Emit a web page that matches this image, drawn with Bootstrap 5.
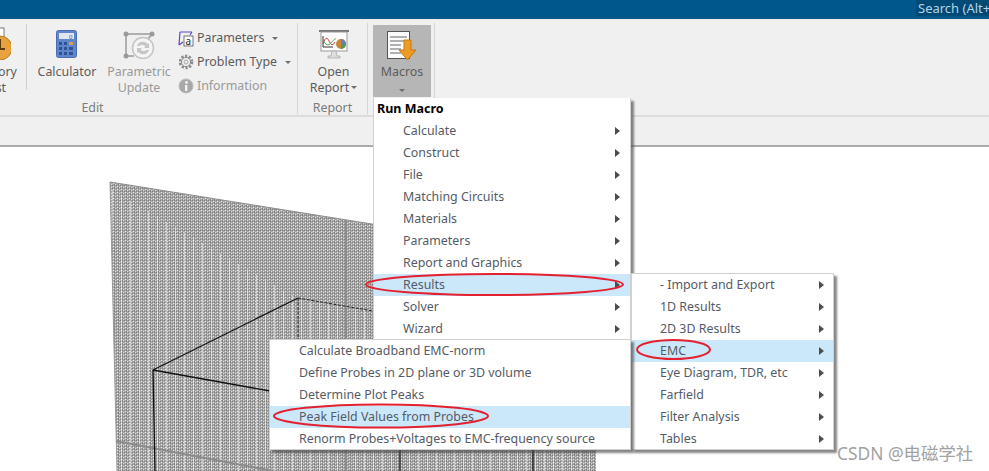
<!DOCTYPE html>
<html lang="en">
<head>
    <meta charset="UTF-8">
    <title>Run Macro</title>
    <link href="https://cdn.jsdelivr.net/npm/bootstrap@5.3.0/dist/css/bootstrap.min.css" rel="stylesheet">
    <style>
        html, body { height: 471px; overflow: hidden; }
        body { position: relative; background: #fff; font: 12.4px/16px "Noto Sans", "Noto Sans CJK SC", sans-serif; color: #555b66; }

        /* title bar */
        .title-strip { height: 20px; background: #00578a; border-bottom: 1px solid #e8e8e8; }
        .search-box { width: 73px; height: 16px; background: #004a76; color: #b9d2e2; font-size: 13px; line-height: 16px; padding-left: 2px; white-space: nowrap; overflow: hidden; }

        /* ribbon */
        .ribbon { height: 97px; background: #f0f0f0; border-bottom: 2px solid #dcdcdc; overflow: hidden; }
        .rb-group { border-right: 1px solid #d4d4d4; margin-top: 3px; height: 91px; flex: none; }
        .rb-buttons { height: 77px; }
        .rb-label { text-align: center; color: #7b7b7b; line-height: 16px; }
        .rb-edit { width: 410px; margin-left: -112px; }
        .rb-report { width: 70px; }
        .rb-macros { width: 67px; padding: 2px 3px 0 5px; }
        .rb-btn { flex: none; text-align: center; padding-top: 7px; color: #5c5c5c; }
        .rb-btn svg { display: block; margin: 0 auto 5px; }
        .rb-history { width: 139px; padding-left: 78px; border-right: 1px solid #d0d0d0; height: 66px; margin-top: 1px; padding-top: 2px; }
        .rb-history svg { margin-bottom: 4px; }
        .rb-calc { width: 80px; }
        .rb-param { width: 64px; color: #9a9a9a; }
        .rb-small { padding: 3px 0 0 7px; flex: none; }
        .rb-line { height: 24px; display: flex; align-items: center; gap: 3px; white-space: nowrap; color: #5c5c5c; }
        .rb-line.is-off { color: #9a9a9a; }
        .rb-caret { display: inline-block; border: 3px solid transparent; border-top: 3px solid #6d6d6d; border-bottom: 0; margin-left: 5px; }
        .rb-open { padding: 6px 0 0 2px; }
        .rb-open svg { margin-bottom: 4px; }
        .rb-open-caret { margin-left: 2px; vertical-align: 3px; }
        .rb-active { height: 72px; background: #b6b6b6; padding-top: 5px; text-align: center; color: #5c5c5c; }
        .rb-active svg { display: block; margin: 0 auto 1px; }
        .rb-active .rb-caret { margin: 0; }
        .tab-strip { height: 30px; background: #f0f0f0; border-bottom: 2px solid #ababab; }

        /* mesh area */
        .mesh-area { height: 324px; }
        .mesh-area svg { display: block; }

        /* menus */
        .macro-menu { display: block; position: absolute; margin: 0; padding: 0; border: 1px solid #d0d0d0; border-radius: 0; min-width: 0; background: #fff; box-shadow: 3px 3px 2px rgba(70, 70, 70, .65); font-size: 12.4px; color: #555b66; }
        .macro-main { left: 373px; top: 98px; width: 258px; height: 252px; border-top: 0; border-bottom: 0; z-index: 2; }
        .macro-sub { left: 631px; top: 273px; width: 203px; height: 177px; z-index: 3; }
        .macro-leaf { left: 269px; top: 339px; width: 362px; height: 111px; z-index: 4; }
        .macro-head { height: 22px; padding: 0 3px; font-weight: 700; color: #000; line-height: 21px; font-size: 12.5px; }
        .macro-item { display: flex; justify-content: space-between; align-items: center; height: 22px; padding: 0 10px 0 29px; color: #555b66; line-height: 22px; white-space: nowrap; }
        .macro-sub .macro-item { padding-left: 28px; padding-right: 9px; }
        .macro-leaf .macro-item { padding-left: 29px; }
        .macro-item.is-hot { background: #cbe8fb; color: #555b66; }
        .macro-arrow { border-left: 5px solid #4d4d4d; border-top: 4px solid transparent; border-bottom: 4px solid transparent; }

        .ring-layer { position: absolute; left: 0; top: 0; z-index: 5; pointer-events: none; }
        .csdn-mark { position: absolute; left: 837px; top: 442px; color: #a2a2a2; font-size: 17.4px; line-height: 22px; z-index: 6; white-space: nowrap; }
    </style>
</head>
<body>
    <div class="title-strip d-flex justify-content-end">
        <div class="search-box">Search (Alt+</div>
    </div>

    <div class="ribbon d-flex">
        <div class="rb-group rb-edit">
            <div class="rb-buttons d-flex">
                <div class="rb-btn rb-history">
                    <svg width="30" height="34" viewBox="0 0 30 34">
                        <rect x="9" y="2" width="14" height="11" fill="#fff" stroke="#777"/>
                        <circle cx="19" cy="22" r="12" fill="#e8a33e" stroke="#b97a20"/>
                        <path d="M19 13v10h5" fill="none" stroke="#5a3a10" stroke-width="2"/>
                    </svg>
                    History<br>List
                </div>
                <div class="rb-btn rb-calc">
                    <svg width="22" height="29" viewBox="0 0 22 29">
                        <rect x=".5" y=".5" width="20" height="27" rx="2" fill="#5f86cc" stroke="#4a6db0"/>
                        <rect x="3" y="3" width="15" height="6" fill="#dfe6f2"/>
                        <text x="13" y="8.500" font-size="6" fill="#555">0</text>
                        <g fill="#2f538f">
                            <rect x="3" y="12" width="3" height="3"/><rect x="8" y="12" width="3" height="3"/><rect x="13" y="12" width="4" height="3" fill="#d6a14e"/>
                            <rect x="3" y="17" width="3" height="3"/><rect x="8" y="17" width="3" height="3"/><rect x="13" y="17" width="4" height="3"/>
                            <rect x="3" y="22" width="3" height="3"/><rect x="8" y="22" width="3" height="3"/><rect x="13" y="22" width="4" height="3"/>
                        </g>
                    </svg>
                    Calculator
                </div>
                <div class="rb-btn rb-param">
                    <svg width="34" height="29" viewBox="0 0 34 29">
                        <path d="M4 4h26M4 4v22M4 26h8M30 4l-8 10" fill="none" stroke="#9a9a9a" stroke-width="1.500"/>
                        <g fill="#9a9a9a"><circle cx="4" cy="4" r="2.500"/><circle cx="30" cy="4" r="2.500"/><circle cx="4" cy="26" r="2.500"/></g>
                        <circle cx="21" cy="18" r="10.500" fill="#f4f4f4" stroke="#c4c4c4" stroke-width="1.500"/>
                        <path d="M15 16a6 6 0 0 1 10.500-2l1.500-1v5h-5l1.500-1.500a4 4 0 0 0-6-.5zM27 20a6 6 0 0 1-10.500 2l-1.500 1v-5h5l-1.500 1.500a4 4 0 0 0 6 .5z" fill="#c6c6c6"/>
                    </svg>
                    Parametric<br>Update
                </div>
                <div class="rb-small">
                    <div class="rb-line">
                        <svg width="16" height="17" viewBox="0 0 16 17">
                            <path d="M2 2h12M2 2L1 15M1 15l4-3M14 2l-2 3" fill="none" stroke="#6246c4" stroke-width="1.200"/>
                            <rect x="6" y="6" width="9" height="10" fill="#fff" stroke="#555" stroke-width=".8"/>
                            <text x="7.500" y="14.500" font-size="10" fill="#222">a</text>
                        </svg>
                        <span>Parameters</span><i class="rb-caret"></i>
                    </div>
                    <div class="rb-line">
                        <svg width="16" height="16" viewBox="0 0 16 16">
                            <circle cx="8" cy="8" r="6" fill="none" stroke="#8a8a8a" stroke-width="2.600" stroke-dasharray="2.200 1.600"/>
                            <circle cx="8" cy="8" r="4.600" fill="#eee" stroke="#8a8a8a"/>
                            <circle cx="8" cy="8" r="2" fill="none" stroke="#aaa"/>
                        </svg>
                        <span>Problem Type</span><i class="rb-caret"></i>
                    </div>
                    <div class="rb-line is-off">
                        <svg width="16" height="16" viewBox="0 0 16 16">
                            <circle cx="8" cy="8" r="7" fill="#a8a8a8" stroke="#bcbcbc"/>
                            <rect x="7" y="7" width="2.400" height="6" fill="#f2f2f2"/>
                            <circle cx="8.500" cy="4.500" r="1.400" fill="#f2f2f2"/>
                        </svg>
                        <span>Information</span>
                    </div>
                </div>
            </div>
            <div class="rb-label">Edit</div>
        </div>

        <div class="rb-group rb-report">
            <div class="rb-buttons">
                <div class="rb-btn rb-open">
                    <svg width="32" height="31" viewBox="0 0 32 31">
                        <rect x="1" y="1" width="30" height="2" fill="#777"/>
                        <rect x="3" y="3" width="26" height="19" fill="#fff" stroke="#999"/>
                        <path d="M5 7v11h10" fill="none" stroke="#333"/>
                        <path d="M5 15q3-10 6-3t6 1" fill="none" stroke="#d0443a"/>
                        <path d="M5 11q4 8 8 3t5-4" fill="none" stroke="#55a24a"/>
                        <circle cx="23" cy="15" r="5" fill="#c9873c"/>
                        <path d="M23 15v5a5 5 0 0 0 5-5z" fill="#4f9a57"/>
                        <path d="M23 15h5a5 5 0 0 0-5-5z" fill="#6f7fb2"/>
                        <path d="M14 22h4l1 5h3v2H10v-2h3z" fill="#ddd" stroke="#999" stroke-width=".6"/>
                    </svg>
                    Open<br>Report<i class="rb-caret rb-open-caret"></i>
                </div>
            </div>
            <div class="rb-label">Report</div>
        </div>

        <div class="rb-group rb-macros">
            <div class="rb-active">
                <svg width="32" height="33" viewBox="0 0 32 33">
                    <rect x="1.500" y="1.500" width="22" height="27" fill="#fbfbfb" stroke="#555"/>
                    <path d="M4 7h17M4 11h17M4 15h11M4 19h11M4 23h11" stroke="#666"/>
                    <path d="M18 10h7v10h5l-8.500 10L13 20h5z" fill="#ec9c22" stroke="#c67a10"/>
                </svg>
                Macros<br><i class="rb-caret"></i>
            </div>
        </div>
    </div>

    <div class="tab-strip"></div>

    <div class="mesh-area">
        <svg width="989" height="324" viewBox="0 147 989 324">
            <defs>
                <pattern id="meshDots" width="4" height="3" patternUnits="userSpaceOnUse">
                    <rect width="4" height="3" fill="#a8a8a8"/>
                    <rect x="1" y="0" width="1" height="1" fill="#e8e8e8"/>
                    <rect x="3" y="1" width="1" height="1" fill="#dcdcdc"/>
                    <rect x="0" y="2" width="1" height="1" fill="#808080"/>
                    <rect x="2" y="1" width="1" height="2" fill="#828282"/>
                </pattern>
                <pattern id="meshBars" width="9" height="4" patternUnits="userSpaceOnUse">
                    <rect x="4" width="1" height="4" fill="#f4f4f4" opacity=".6"/>
                </pattern>
            </defs>
            <polygon points="110,182 596,260 596,471 117,471" fill="url(#meshDots)"/>
            <polygon points="112,190 300,300 596,345 596,471 117,471" fill="url(#meshBars)"/>
            <path d="M110 182L596 260" stroke="#8d8d8d" fill="none"/>
            <path d="M110 182L117 471" stroke="#9a9a9a" fill="none"/>
            <path d="M346 220V471" stroke="#8b8b8b" stroke-width="2" fill="none"/>
            <path d="M116 441L273 471" stroke="#8b8b8b" stroke-width="2" fill="none"/>
            <path d="M153 370L298 298M153 370L270 391M153 370L155 471" stroke="#111" stroke-width="1.300" fill="none"/>
            <path d="M298 298L373 311M298 298V340" stroke="#222" stroke-dasharray="3 1.500" fill="none"/>
            <path d="M400 449V471M533 449V471" stroke="#111" stroke-width="1.300" fill="none"/>
        </svg>
    </div>

    <div class="dropdown-menu show macro-menu macro-main">
        <div class="macro-head">Run Macro</div>
        <div class="macro-item">Calculate<i class="macro-arrow"></i></div>
        <div class="macro-item">Construct<i class="macro-arrow"></i></div>
        <div class="macro-item">File<i class="macro-arrow"></i></div>
        <div class="macro-item">Matching Circuits<i class="macro-arrow"></i></div>
        <div class="macro-item">Materials<i class="macro-arrow"></i></div>
        <div class="macro-item">Parameters<i class="macro-arrow"></i></div>
        <div class="macro-item">Report and Graphics<i class="macro-arrow"></i></div>
        <div class="macro-item is-hot">Results<i class="macro-arrow"></i></div>
        <div class="macro-item">Solver<i class="macro-arrow"></i></div>
        <div class="macro-item">Wizard<i class="macro-arrow"></i></div>
    </div>

    <div class="dropdown-menu show macro-menu macro-sub">
        <div class="macro-item">- Import and Export<i class="macro-arrow"></i></div>
        <div class="macro-item">1D Results<i class="macro-arrow"></i></div>
        <div class="macro-item">2D 3D Results<i class="macro-arrow"></i></div>
        <div class="macro-item is-hot">EMC<i class="macro-arrow"></i></div>
        <div class="macro-item">Eye Diagram, TDR, etc<i class="macro-arrow"></i></div>
        <div class="macro-item">Farfield<i class="macro-arrow"></i></div>
        <div class="macro-item">Filter Analysis<i class="macro-arrow"></i></div>
        <div class="macro-item">Tables<i class="macro-arrow"></i></div>
    </div>

    <div class="dropdown-menu show macro-menu macro-leaf">
        <div class="macro-item">Calculate Broadband EMC-norm</div>
        <div class="macro-item">Define Probes in 2D plane or 3D volume</div>
        <div class="macro-item">Determine Plot Peaks</div>
        <div class="macro-item is-hot">Peak Field Values from Probes</div>
        <div class="macro-item">Renorm Probes+Voltages to EMC-frequency source</div>
    </div>

    <svg class="ring-layer" width="989" height="471" viewBox="0 0 989 471">
        <g fill="none" stroke="#e3202f" stroke-width="2">
            <ellipse cx="494.500" cy="284.500" rx="128.500" ry="10.500"/>
            <ellipse cx="673.500" cy="349.500" rx="36.500" ry="9.500"/>
            <ellipse cx="381" cy="416" rx="107" ry="11.500"/>
        </g>
    </svg>

    <div class="csdn-mark">CSDN @电磁学社</div>

    <script src="https://cdn.jsdelivr.net/npm/bootstrap@5.3.0/dist/js/bootstrap.bundle.min.js"></script>
</body>
</html>
